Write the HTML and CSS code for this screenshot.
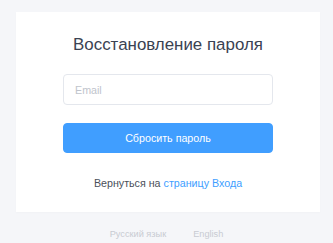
FILE: index.html
```html
<!DOCTYPE html>
<html lang="ru">
<head>
<meta charset="utf-8">
<link rel="stylesheet" href="styles.css">
</head>
<body>
<div class="page">
  <div class="card">
    <h1 class="title">Восстановление пароля</h1>
    <input class="field" type="text" placeholder="Email">
    <button class="btn">Сбросить пароль</button>
    <p class="back">Вернуться на <a class="link" href="#">страницу Входа</a></p>
  </div>
  <div class="langs">
    <span class="lang">Русский язык</span>
    <span class="lang">English</span>
  </div>
</div>
</body>
</html>
```

FILE: styles.css
```css
html, body {
  margin: 0;
  padding: 0;
  background: #f5f6f9;
  font-family: "Liberation Sans", Arial, sans-serif;
}
.page {
  padding-top: 12px;
}
.card {
  width: 304px;
  margin-left: 16px;
  box-sizing: border-box;
  background: #fff;
  padding: 23px 47px 22px;
  display: flex;
  flex-direction: column;
  box-shadow: 0 1px 2px rgba(0, 0, 0, 0.02);
}
.title {
  margin: 0;
  font-size: 16.9px;
  font-weight: normal;
  line-height: 20px;
  color: #3a4252;
  text-align: center;
}
.field {
  margin-top: 19px;
  height: 31px;
  box-sizing: border-box;
  border: 1px solid #e4e7ed;
  border-radius: 4px;
  padding: 0 11px;
  font-family: inherit;
  font-size: 10.7px;
  color: #606266;
  outline: none;
}
.field::placeholder {
  color: #c0c4cc;
}
.btn {
  margin-top: 18px;
  height: 30px;
  border: 1px solid #409eff;
  border-radius: 4px;
  background: #409eff;
  color: #fff;
  font-family: inherit;
  font-size: 10.7px;
  padding: 0;
}
.back {
  margin: 24px 0 0;
  text-align: center;
  font-size: 10.7px;
  line-height: 13px;
  color: #4a4f5a;
}
.link {
  color: #409eff;
  text-decoration: none;
}
.langs {
  display: flex;
  justify-content: center;
  gap: 27px;
  padding-top: 17px;
  font-size: 9.2px;
  line-height: 11px;
}
.lang {
  color: #c8cbd2;
}
```
